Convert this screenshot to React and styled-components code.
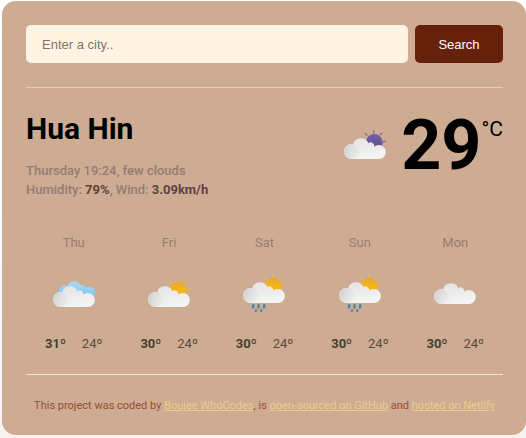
import React, { useId } from "react";
import styled, { createGlobalStyle } from "styled-components";

const GlobalStyle = createGlobalStyle`
  * { box-sizing: border-box; }
  body {
    margin: 0;
    background: linear-gradient(#ffffff, #f8f3f2);
    font-family: Roboto, sans-serif;
    font-size: 13px;
    overflow-x: hidden;
  }
`;

const Card = styled.main`
  margin: 1px 0 3px 2px;
  padding: 24px 23px 20px 24px;
  border-radius: 14px;
  background: #ceac93;
`;

const SearchForm = styled.form`
  display: flex;
  gap: 7px;
  padding-bottom: 24px;
  border-bottom: 1px solid #e5cdbd;
`;

const CityInput = styled.input`
  flex: 1;
  min-width: 0;
  height: 38px;
  padding: 0 16px;
  border: 0;
  border-radius: 5px;
  background: #fff3e2;
  color: #4a3a33;
  font: 13px "Liberation Sans", Arial, sans-serif;
  &::placeholder { color: #7d756e; opacity: 1; }
`;

const SearchButton = styled.button`
  width: 88px;
  height: 38px;
  padding: 0;
  border: 0;
  border-radius: 5px;
  background: #67210b;
  color: #ffffff;
  font: 13px "Liberation Sans", Arial, sans-serif;
`;

const Current = styled.section`
  display: flex;
  justify-content: space-between;
  padding-top: 21px;
`;

const City = styled.h1`
  margin: 0 0 12px;
  font-size: 30px;
  line-height: 40px;
  font-weight: 700;
  color: #000;
`;

const Details = styled.p`
  margin: 0;
  font-weight: 500;
  line-height: 19px;
  color: #967b73;
  strong { font-weight: 700; color: #5c433c; }
`;

const Reading = styled.div`
  display: flex;
  align-items: flex-start;
`;

const CurrentIcon = styled.div`
  padding: 21px 15px 0 0;
`;

const Degrees = styled.div`
  padding-top: 1px;
  font-size: 70px;
  line-height: 70px;
  font-weight: 700;
  color: #000;
`;

const Unit = styled.div`
  padding-top: 7px;
  font-size: 21px;
  line-height: 26px;
  color: #000;
`;

const Forecast = styled.section`
  display: grid;
  grid-template-columns: repeat(5, 1fr);
  padding: 34px 0 20px;
  border-bottom: 1px solid #f8e5d5;
`;

const Day = styled.div`
  display: flex;
  flex-direction: column;
  align-items: center;
`;

const DayName = styled.div`
  line-height: 20px;
  color: #997b74;
`;

const Icon = styled.svg`
  display: block;
  width: 42px;
  height: 42px;
`;

const DayIcon = styled.div`
  padding: 21px 0 18px;
`;

const Temps = styled.div`
  display: flex;
  gap: 16px;
  line-height: 20px;
  color: #564b3b;
  strong { font-weight: 700; color: #453f2c; }
`;

const Footer = styled.footer`
  padding-top: 22px;
  text-align: center;
  font-size: 11px;
  line-height: 18px;
  color: #95502d;
  a { color: #eccb8b; }
`;

const CLOUD =
  "M7.5 22A7.5 7.5 0 1 1 9.2 7.2A8 8 0 0 1 24.4 6.2A3.6 3.6 0 0 1 30.2 9.7A7 7 0 1 1 34.8 22Z";
const BACK_CLOUD =
  "M7 10A6 6 0 0 1 14.5 1A7 7 0 0 1 27.5 .2A3.5 3.5 0 0 1 32.4 3A6.2 6.2 0 1 1 36 14.2L12 14Z";

const OFFSETS = { clouds: 11, sun: 11, night: 7, rain: 7, cloud: 8 };

function WeatherIcon({ kind, label }) {
  const id = useId();
  const disc = kind === "night" ? `url(#${id}n)` : `url(#${id}s)`;
  const rays = kind === "night" ? "#7766a0" : "#efb43b";
  return (
    <Icon viewBox="0 0 42 42" role="img" aria-label={label}>
      <defs>
        <linearGradient id={`${id}c`} x1="0" y1="0" x2="0.35" y2="1">
          <stop offset="0" stopColor="#e3e2e2" />
          <stop offset="1" stopColor="#f4f4f4" />
        </linearGradient>
        <linearGradient id={`${id}l`} x1="0" y1="0" x2="1" y2="0.2">
          <stop offset="0" stopColor="#cfd0d0" />
          <stop offset="1" stopColor="#dedede" stopOpacity="0.35" />
        </linearGradient>
        <linearGradient id={`${id}s`} x1="0" y1="0" x2="0" y2="1">
          <stop offset="0" stopColor="#e8a82a" />
          <stop offset="1" stopColor="#ffc005" />
        </linearGradient>
        <linearGradient id={`${id}n`} x1="0" y1="0" x2="0" y2="1">
          <stop offset="0" stopColor="#735f9b" />
          <stop offset="1" stopColor="#5551a0" />
        </linearGradient>
        <linearGradient id={`${id}b`} x1="0" y1="0" x2="0" y2="1">
          <stop offset="0" stopColor="#aedcf3" />
          <stop offset="1" stopColor="#72c4f0" />
        </linearGradient>
      </defs>
      <g transform={`translate(0 ${OFFSETS[kind]})`}>
        {kind === "clouds" && <path d={BACK_CLOUD} fill={`url(#${id}b)`} />}
        {["sun", "rain", "night"].includes(kind) && (
          <g>
            <path
              d="M29.7-4v-2M36.3-2.2l1.6-1.7M22.9-2l-1.7-1.6M38.9 4.8l2.6-.7M38.2 10l1.8.9"
              stroke={rays}
              strokeWidth="1.3"
              strokeLinecap="round"
            />
            <circle cx="30.2" cy="5.5" r="8.4" fill={disc} />
          </g>
        )}
        <path d={CLOUD} fill={`url(#${id}c)`} />
        <circle cx="7.5" cy="14.5" r="7.5" fill={`url(#${id}l)`} />
        {kind === "rain" && (
          <path
            d="M10.2 24.3l-.2 2.2M15.6 24.3l-.2 2.2M21.2 24.3l-.2 2.2M12.9 29.4v.4M18.2 29.4v.4"
            stroke="#4689a9"
            strokeWidth="2.5"
            strokeLinecap="round"
          />
        )}
      </g>
    </Icon>
  );
}

const DAYS = [
  { name: "Thu", kind: "clouds", label: "Broken clouds", max: 31, min: 24 },
  { name: "Fri", kind: "sun", label: "Few clouds", max: 30, min: 24 },
  { name: "Sat", kind: "rain", label: "Rain", max: 30, min: 24 },
  { name: "Sun", kind: "rain", label: "Rain", max: 30, min: 24 },
  { name: "Mon", kind: "cloud", label: "Scattered clouds", max: 30, min: 24 },
];

export default function App() {
  return (
    <>
      <GlobalStyle />
      <Card>
        <SearchForm onSubmit={(e) => e.preventDefault()}>
          <CityInput type="search" placeholder="Enter a city.." aria-label="City" />
          <SearchButton type="submit">Search</SearchButton>
        </SearchForm>
        <Current>
          <div>
            <City>Hua Hin</City>
            <Details>Thursday 19:24, few clouds</Details>
            <Details>
              Humidity: <strong>79%</strong>, Wind: <strong>3.09km/h</strong>
            </Details>
          </div>
          <Reading>
            <CurrentIcon>
              <WeatherIcon kind="night" label="Few clouds at night" />
            </CurrentIcon>
            <Degrees>29</Degrees>
            <Unit>°C</Unit>
          </Reading>
        </Current>
        <Forecast>
          {DAYS.map((day) => (
            <Day key={day.name}>
              <DayName>{day.name}</DayName>
              <DayIcon>
                <WeatherIcon kind={day.kind} label={day.label} />
              </DayIcon>
              <Temps>
                <strong>{day.max}º</strong>
                <span>{day.min}º</span>
              </Temps>
            </Day>
          ))}
        </Forecast>
        <Footer>
          This project was coded by <a href="#author">Boujee WhoCodes</a>, is{" "}
          <a href="#github">open-sourced on GitHub</a> and{" "}
          <a href="#netlify">hosted on Netlify</a>
        </Footer>
      </Card>
    </>
  );
}
